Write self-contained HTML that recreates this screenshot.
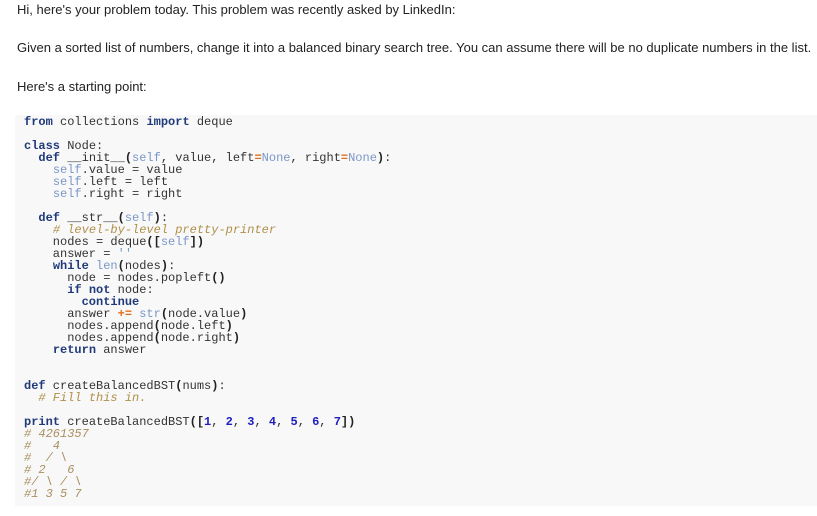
<!DOCTYPE html>
<html><head><style>
body{margin:0;background:#fff;width:817px;height:516px;overflow:hidden;font-family:"Liberation Sans",Arial,sans-serif;font-size:13px;color:#222}
p{position:absolute;left:17px;margin:0;line-height:16px}
pre{position:absolute;left:15px;top:115px;width:802px;height:391px;margin:0;padding:1px 0 0 9px;box-sizing:border-box;background:#f8f8f8;font-family:"Liberation Mono",monospace;font-size:12px;line-height:12px;color:#333}
.k{color:#1f3a7a;font-weight:bold}
.s{color:#7a96c8}
.c{color:#b0904a;font-style:italic}
.o{color:#e07020;font-weight:bold}
.n{color:#2020c0;font-weight:bold}
.p{font-weight:bold;color:#222}
.h{color:#a89060;font-style:italic}
</style></head><body>
<p style="top:2px">Hi, here's your problem today. This problem was recently asked by LinkedIn:</p>
<p style="top:40px">Given a sorted list of numbers, change it into a balanced binary search tree. You can assume there will be no duplicate numbers in the list.</p>
<p style="top:79px">Here's a starting point:</p>
<pre><span class="k">from</span> collections <span class="k">import</span> deque

<span class="k">class</span> Node:
  <span class="k">def</span> __init__<span class="p">(</span><span class="s">self</span>, value, left<span class="o">=</span><span class="s">None</span>, right<span class="o">=</span><span class="s">None</span><span class="p">)</span>:
    <span class="s">self</span>.value = value
    <span class="s">self</span>.left = left
    <span class="s">self</span>.right = right

  <span class="k">def</span> __str__<span class="p">(</span><span class="s">self</span><span class="p">)</span>:
    <span class="c"># level-by-level pretty-printer</span>
    nodes = deque<span class="p">([</span><span class="s">self</span><span class="p">])</span>
    answer = <span class="s">''</span>
    <span class="k">while</span> <span class="s">len</span><span class="p">(</span>nodes<span class="p">)</span>:
      node = nodes.popleft<span class="p">()</span>
      <span class="k">if not</span> node:
        <span class="k">continue</span>
      answer <span class="o">+=</span> <span class="s">str</span><span class="p">(</span>node.value<span class="p">)</span>
      nodes.append<span class="p">(</span>node.left<span class="p">)</span>
      nodes.append<span class="p">(</span>node.right<span class="p">)</span>
    <span class="k">return</span> answer


<span class="k">def</span> createBalancedBST<span class="p">(</span>nums<span class="p">)</span>:
  <span class="c"># Fill this in.</span>

<span class="k">print</span> createBalancedBST<span class="p">([</span><span class="n">1</span>, <span class="n">2</span>, <span class="n">3</span>, <span class="n">4</span>, <span class="n">5</span>, <span class="n">6</span>, <span class="n">7</span><span class="p">])</span>
<span class="h"># 4261357</span>
<span class="h">#   4</span>
<span class="h">#  / \</span>
<span class="h"># 2   6</span>
<span class="h">#/ \ / \</span>
<span class="h">#1 3 5 7</span></pre>
</body></html>
